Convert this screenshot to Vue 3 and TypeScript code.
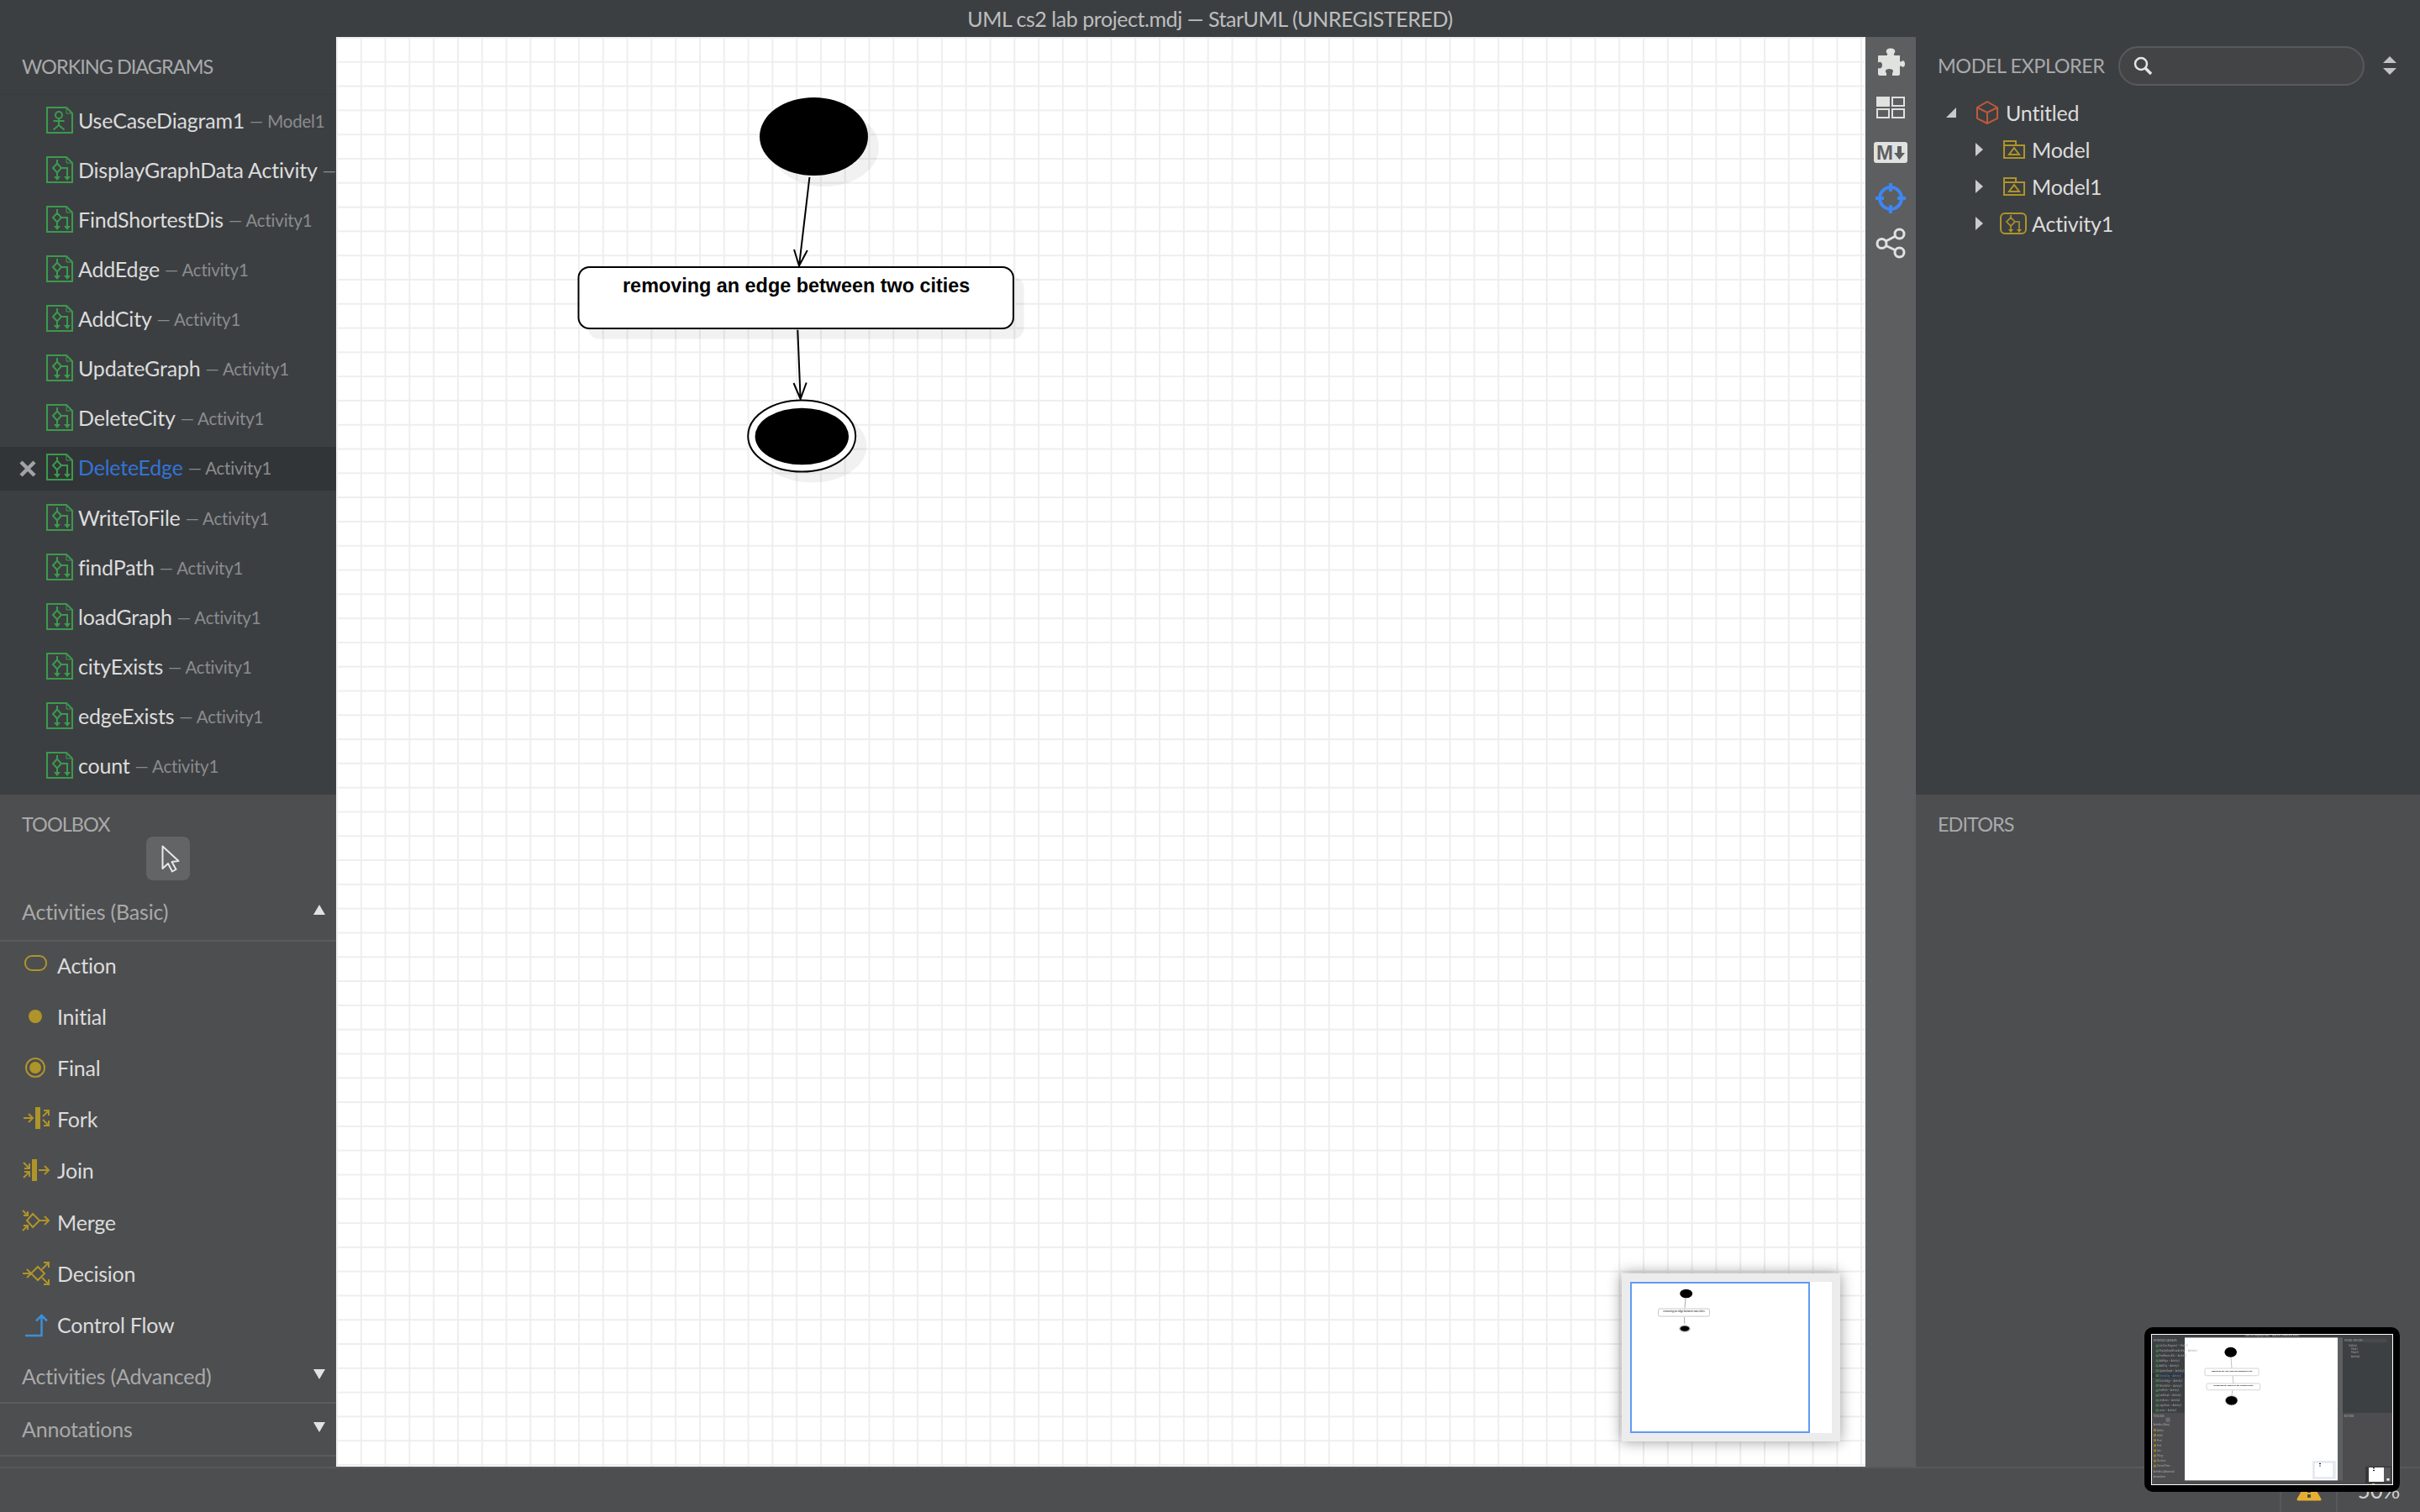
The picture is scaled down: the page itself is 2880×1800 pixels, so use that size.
<template>
  <div class="app">
    <header class="title-bar">UML cs2 lab project.mdj — StarUML (UNREGISTERED)</header>

    <div class="main">
      <!-- left column -->
      <aside class="left">
        <section class="working">
          <div class="panel-title working-title">WORKING DIAGRAMS</div>
          <div class="rows">
            <div v-for="d in diagrams" :key="d.name" class="row" :class="{ active: d.name === 'DeleteEdge' }">
              <span class="row-close">
                <svg v-if="d.name === 'DeleteEdge'" width="20" height="20" viewBox="0 0 20 20">
                  <path d="M2 2 L18 18 M18 2 L2 18" stroke="#a2a3a4" stroke-width="4.5" fill="none" />
                </svg>
              </span>
              <svg class="row-icon" width="32" height="32" viewBox="0 0 32 32" fill="none" stroke="#3c9a4c" stroke-width="2">
                <path d="M1 1 H24 L31 8 V31 H1 Z" />
                <path d="M24 1 V8 H31" stroke-width="1" />
                <template v-if="d.usecase">
                  <circle cx="15" cy="10" r="4" />
                  <path d="M15 14 V22 M8.5 17 H21.5 M8.5 27.5 L15 22 L21.5 27.5" />
                </template>
                <template v-else>
                  <path d="M13 4 V8.5 M13 8.5 L18 14 L13 19.5 L8 14 Z M13 19.5 V26 M18 14 H25 V26" />
                  <path d="M9 24 H17 L13 29 Z M21 24 H29 L25 29 Z" fill="#3c9a4c" stroke="none" />
                </template>
              </svg>
              <span class="row-name">{{ d.name }}</span>
              <span class="row-sub">— {{ d.owner }}</span>
            </div>
          </div>
        </section>

        <section class="toolbox">
          <div class="panel-title toolbox-title">TOOLBOX</div>
          <div class="cursor-wrap">
            <div class="cursor-btn">
              <svg width="52" height="52" viewBox="0 0 52 52">
                <path d="M19.5 11.5 V38 L26 32 L31 41.5 L35.5 39 L30.5 30 L38.5 29 Z" fill="#636466" stroke="#e6e7e7" stroke-width="2" stroke-linejoin="round" />
              </svg>
            </div>
          </div>

          <div class="group-head open">
            <span>Activities (Basic)</span>
            <svg width="14" height="12" viewBox="0 0 14 12"><path d="M7 0 L14 12 H0 Z" fill="#e2e2e2" /></svg>
          </div>
          <div class="tools">
            <div v-for="t in tools" :key="t" class="tool">
              <svg class="tool-icon" width="34" height="30" viewBox="0 0 34 30" fill="none" stroke="#ae9429" stroke-width="2">
                <rect v-if="t === 'Action'" x="4" y="4" width="25" height="17" rx="8" />
                <circle v-if="t === 'Initial'" cx="16" cy="15" r="8" fill="#ae9429" stroke="none" />
                <template v-if="t === 'Final'">
                  <circle cx="16" cy="15" r="11" />
                  <circle cx="16" cy="15" r="7" fill="#ae9429" stroke="none" />
                </template>
                <template v-if="t === 'Fork'">
                  <rect x="16" y="1" width="6" height="26" fill="#ae9429" stroke="none" />
                  <path d="M2 14 H13 M8 9 L13 14 L8 19 M25 12 L32 5 M26 5 H32 V11 M25 16 L32 23 M32 17 V23 H26" />
                </template>
                <template v-if="t === 'Join'">
                  <rect x="12" y="2" width="6" height="26" fill="#ae9429" stroke="none" />
                  <path d="M20 15 H32 M27 10 L32 15 L27 20 M2 6 L9 13 M9 7 V13 H3 M2 24 L9 17 M3 17 H9 V23" />
                </template>
                <template v-if="t === 'Merge'">
                  <path d="M13 5 L21 13 L13 21 L6 13 Z M21 13 H32 M27 8 L32 13 L27 18 M1 1 L7 7 M7 2 V7 H2 M1 25 L7 19 M2 19 H7 V24" />
                </template>
                <template v-if="t === 'Decision'">
                  <path d="M19 7 L27 15 L19 23 L11 15 Z M1 15 H11 M6 10 L11 15 L6 20 M24 10 L32 2 M26 2 H32 V8 M24 20 L32 28 M32 22 V28 H26" />
                </template>
                <path v-if="t === 'Control Flow'" d="M4 28 H23.5 V4 M17 10.5 L23.5 4 L30 10.5" stroke="#3d8fd6" stroke-width="2.5" />
              </svg>
              <span>{{ t }}</span>
            </div>
          </div>

          <div class="group-head">
            <span>Activities (Advanced)</span>
            <svg width="14" height="12" viewBox="0 0 14 12"><path d="M0 0 H14 L7 12 Z" fill="#e2e2e2" /></svg>
          </div>
          <div class="group-head">
            <span>Annotations</span>
            <svg width="14" height="12" viewBox="0 0 14 12"><path d="M0 0 H14 L7 12 Z" fill="#e2e2e2" /></svg>
          </div>
        </section>
      </aside>

      <!-- diagram canvas -->
      <div class="canvas">
        <svg class="diagram" width="1820" height="1702" viewBox="400 44 1820 1702">
          <ellipse cx="981.5" cy="175.5" rx="64.5" ry="46.5" fill="rgba(0,0,0,0.055)" />
          <rect x="700" y="329.5" width="518.5" height="74" rx="13" fill="rgba(0,0,0,0.055)" />
          <ellipse cx="966.5" cy="531" rx="65" ry="43.5" fill="rgba(0,0,0,0.055)" />

          <ellipse cx="968.5" cy="162.5" rx="64.5" ry="46.5" fill="#000" />
          <path d="M963.4 211 L951 316.5 M945 297 L951 316.5 L960.8 298" fill="none" stroke="#000" stroke-width="2" />
          <rect x="688.5" y="318" width="517.5" height="73" rx="13" fill="#fff" stroke="#000" stroke-width="2" />
          <text x="947.7" y="347.5" class="node-text">removing an edge between two cities</text>
          <path d="M949.3 392.7 L952.6 475 M944.5 456 L952.6 475 L959.7 455.5" fill="none" stroke="#000" stroke-width="2" />
          <ellipse cx="954.2" cy="519" rx="64" ry="42.5" fill="#fff" stroke="#000" stroke-width="2" />
          <ellipse cx="954.3" cy="519.5" rx="55.7" ry="33.8" fill="#000" />
        </svg>

        <div class="minimap">
          <svg width="240" height="180" viewBox="0 0 240 180">
            <rect width="240" height="180" fill="#fff" />
            <ellipse cx="66.7" cy="14" rx="7.5" ry="5.2" fill="#000" />
            <path d="M66 19 L65 31 M64.5 42 L64.8 50" stroke="#aaa" fill="none" />
            <rect x="33.5" y="32" width="61" height="9" rx="1.5" fill="#fff" stroke="#c8c8c8" />
            <text x="64" y="36.2" class="mini-text">removing an edge between two cities</text>
            <ellipse cx="65" cy="55.7" rx="6.2" ry="3.8" fill="#000" stroke="#ccc" stroke-width="1.4" />
            <rect x="1" y="1" width="212" height="178" fill="none" stroke="#5f9bf5" stroke-width="2" />
          </svg>
        </div>
      </div>

      <!-- icon strip -->
      <nav class="strip">
        <div class="strip-item">
          <svg width="34" height="33" viewBox="0 0 34 33">
            <path fill="#e0e2e0" d="M3 9 H12 C13 9 13.5 8 13 7 C11.5 5 11 3.5 13 1.5 C15 0 19 0 21 1.5 C23 3.5 22.5 5 21 7 C20.5 8 21 9 22 9 H28 V15.5 C28 16.5 29 17 30 16 C31.5 14.5 34 15 34 19 C34 23 31.5 23.5 30 22 C29 21 28 21.5 28 22.5 V31 C28 32 27 33 26 33 H19 V30 C21 28 20 25 15.5 25 C11 25 10 28 12 30 V33 H4 C3 33 2 32 2 31 V24 C4 25 7 24.5 7 20.5 C7 16.5 4 16 2 17.5 V10 C2 9.5 2.5 9 3 9 Z" />
          </svg>
        </div>
        <div class="strip-item">
          <svg width="34" height="26" viewBox="0 0 34 26" fill="none" stroke="#e0e2e0" stroke-width="2">
            <rect x="0" y="0" width="16" height="12" fill="#e0e2e0" stroke="none" />
            <rect x="19" y="1" width="14" height="10" />
            <rect x="1" y="15" width="14" height="10" />
            <rect x="19" y="15" width="14" height="10" />
          </svg>
        </div>
        <div class="strip-item">
          <svg width="40" height="26" viewBox="0 0 40 26">
            <rect width="40" height="25" rx="3" fill="#e0e2e0" />
            <text x="3" y="21" class="md-text">M</text>
            <path d="M28 5 H33 V13 H37 L30.5 21 L24 13 H28 Z" fill="#5d5e60" />
          </svg>
        </div>
        <div class="strip-item">
          <svg width="36" height="36" viewBox="0 0 36 36" fill="none" stroke="#3e86f0" stroke-width="4">
            <circle cx="18" cy="18" r="13" />
            <path d="M18 0 V10 M18 26 V36 M0 18 H10 M26 18 H36" />
          </svg>
        </div>
        <div class="strip-item">
          <svg width="36" height="37" viewBox="0 0 36 37" fill="none" stroke="#e0e2e0" stroke-width="3">
            <circle cx="28.5" cy="7.5" r="5.5" />
            <circle cx="7.5" cy="19" r="5.5" />
            <circle cx="28.5" cy="29.5" r="5.5" />
            <path d="M12.5 16 L24 10 M12.5 21.5 L24 27" />
          </svg>
        </div>
      </nav>

      <!-- right column -->
      <aside class="right">
        <section class="explorer">
          <div class="explorer-head">
            <span class="panel-title explorer-title">MODEL EXPLORER</span>
            <div class="search">
              <svg width="24" height="24" viewBox="0 0 24 24" fill="none" stroke="#e4e4e4">
                <circle cx="10" cy="10" r="7" stroke-width="2.5" />
                <path d="M15 15 L22 22" stroke-width="3.5" />
              </svg>
            </div>
            <svg class="sort" width="16" height="22" viewBox="0 0 16 22">
              <path d="M8 0 L16 8 H0 Z M0 14 H16 L8 22 Z" fill="#c2c3c3" />
            </svg>
          </div>
          <div class="tree">
            <div class="node root-node">
              <svg class="twist" width="12" height="12" viewBox="0 0 12 12"><path d="M12 0 V12 H0 Z" fill="#c9caca" /></svg>
              <svg class="node-icon" width="26" height="28" viewBox="0 0 26 28" fill="none" stroke="#c0593a" stroke-width="2">
                <path d="M13 1 L25 8 V21 L13 27 L1 21 V8 Z M1 8 L13 14 L25 8 M13 14 V27" />
              </svg>
              <span>Untitled</span>
            </div>
            <div v-for="m in ['Model', 'Model1']" :key="m" class="node child-node">
              <svg class="twist" width="9" height="16" viewBox="0 0 9 16"><path d="M0 0 L9 8 L0 16 Z" fill="#c9caca" /></svg>
              <svg class="node-icon pkg" width="26" height="22" viewBox="0 0 26 22" fill="none" stroke="#ae9429" stroke-width="2">
                <path d="M1 6 V1 H15 V6 M1 6 H25 V21 H1 Z M13 9 L19 17 H7 Z" />
              </svg>
              <span>{{ m }}</span>
            </div>
            <div class="node child-node">
              <svg class="twist" width="9" height="16" viewBox="0 0 9 16"><path d="M0 0 L9 8 L0 16 Z" fill="#c9caca" /></svg>
              <svg class="node-icon act" width="32" height="26" viewBox="0 0 32 26" fill="none" stroke="#ae9429" stroke-width="2">
                <rect x="1" y="1" width="30" height="24" rx="5" />
                <path d="M13 3 V6 M13 6 L18 11 L13 16 L8 11 Z M13 16 V21 M18 11 H23 V21" stroke-width="1.6" />
                <path d="M10 20 H16 L13 24 Z M20 20 H26 L23 24 Z" fill="#ae9429" stroke="none" />
              </svg>
              <span>Activity1</span>
            </div>
          </div>
        </section>
        <section class="editors">
          <div class="panel-title editors-title">EDITORS</div>
        </section>
      </aside>
    </div>

    <footer class="status">
      <div class="status-cell warn">
        <svg width="30" height="28" viewBox="0 0 30 28">
          <path d="M15 2 L28 25 H2 Z" fill="#e8ae31" stroke="#e8ae31" stroke-width="3" stroke-linejoin="round" />
          <rect x="13" y="9" width="4" height="8" fill="#4d4e50" />
          <rect x="13" y="19" width="4" height="4" fill="#4d4e50" />
        </svg>
      </div>
      <div class="status-cell zoom-cell">50%</div>
    </footer>

    <!-- screenshot preview that floats over the corner -->
    <div class="preview">
      <svg width="288" height="180" viewBox="0 0 288 180">
        <defs>
          <filter id="previewBlur" x="-2%" y="-2%" width="104%" height="104%">
            <feGaussianBlur stdDeviation="0.45" />
          </filter>
        </defs>
        <g filter="url(#previewBlur)">
          <rect width="288" height="180" fill="#3c3f42" />
          <rect y="94" width="40" height="80" fill="#4d4e50" />
          <rect x="226" y="94" width="62" height="80" fill="#4d4e50" />
          <rect y="174" width="288" height="6" fill="#4d4e50" />
          <rect x="222" y="4.4" width="6" height="170" fill="#5d5e60" />
          <rect x="40" y="4.4" width="182" height="170" fill="#fff" />
          <text x="144" y="3.2" class="pv-title" text-anchor="middle">UML cs2 lab project.mdj — StarUML (UNREGISTERED)</text>
          <text x="2.8" y="8.7" class="pv-head">WORKING DIAGRAMS</text>
          <rect y="47" width="40" height="5.2" fill="#323537" />
          <g v-for="(d, i) in previewRows" :key="d">
            <rect x="5.5" :y="12.7 + i * 5.9" width="3.2" height="3.2" fill="#3c7a48" />
            <text x="9.5" :y="15.3 + i * 5.9" class="pv-row" :class="{ blue: i === 6 }">{{ d }}</text>
          </g>
          <text x="2.8" y="98.8" class="pv-head">TOOLBOX</text>
          <rect x="17.5" y="99.7" width="5.2" height="5.2" fill="#6b6c6e" />
          <text x="2.8" y="109.4" class="pv-head">Activities (Basic)</text>
          <g v-for="(t, i) in tools" :key="t">
            <rect x="3" :y="113 + i * 6.1" width="3" height="3" fill="#8f7c30" />
            <text x="7" :y="115.7 + i * 6.1" class="pv-row">{{ t }}</text>
          </g>
          <text x="2.8" y="164.8" class="pv-head">Activities (Advanced)</text>
          <text x="2.8" y="171" class="pv-head">Annotations</text>
          <text x="230" y="8.7" class="pv-head">MODEL EXPLORER</text>
          <rect x="252" y="5.5" width="29" height="4.6" rx="2.3" fill="#48494b" />
          <text x="235" y="14.7" class="pv-row">Untitled</text>
          <text x="238" y="19" class="pv-row">Model</text>
          <text x="238" y="23.4" class="pv-row">Model1</text>
          <text x="238" y="27.8" class="pv-row">Activity1</text>
          <text x="230" y="98.8" class="pv-head">EDITORS</text>

          <ellipse cx="94.7" cy="21.7" rx="7.3" ry="6" fill="#000" />
          <path d="M95 28 L96 41 M97 49.7 L98 59 M97 66.7 L96 73" stroke="#999" stroke-width="0.6" fill="none" />
          <rect x="64" y="41" width="64" height="8.7" rx="1.5" fill="#fff" stroke="#c9c9c9" stroke-width="0.8" />
          <text x="96" y="44.6" class="pv-node">removing the city from the adjacency list</text>
          <rect x="66" y="59" width="63.7" height="7.7" rx="1.5" fill="#fff" stroke="#c9c9c9" stroke-width="0.8" />
          <text x="98" y="62.4" class="pv-node">Removing all edges of the removed city</text>
          <ellipse cx="95.7" cy="79.3" rx="7.3" ry="5.6" fill="#000" stroke="#bbb" stroke-width="0.8" />

          <rect x="192" y="151" width="28" height="21.7" fill="#ececec" />
          <rect x="194" y="153" width="23" height="18" fill="#fff" stroke="#c9dafa" stroke-width="0.8" />
          <ellipse cx="201" cy="154.5" rx="1" ry="0.8" fill="#000" />
          <ellipse cx="201" cy="157" rx="0.8" ry="0.6" fill="#000" />

          <rect x="255" y="157.7" width="31" height="20" fill="#36383a" />
          <rect x="259" y="159" width="18" height="17" fill="#fff" />
          <rect x="277" y="159" width="8" height="17" fill="#56585a" />
          <ellipse cx="265" cy="159.8" rx="1" ry="0.8" fill="#000" />
          <ellipse cx="265" cy="162.5" rx="1" ry="0.8" fill="#000" />
          <rect x="280.5" y="172" width="3" height="2.6" fill="#fff" />
          <rect x="263" y="178" width="3" height="2" fill="#e8ae31" />
        </g>
        <rect x="0.5" y="0.5" width="287" height="179" fill="none" stroke="#fff" />
      </svg>
    </div>
  </div>
</template>

<script setup lang="ts">
interface DiagramRow {
  name: string;
  owner: string;
  usecase?: boolean;
}

const activityNames = [
  'DisplayGraphData Activity',
  'FindShortestDis',
  'AddEdge',
  'AddCity',
  'UpdateGraph',
  'DeleteCity',
  'DeleteEdge',
  'WriteToFile',
  'findPath',
  'loadGraph',
  'cityExists',
  'edgeExists',
  'count',
];

const diagrams: DiagramRow[] = [
  { name: 'UseCaseDiagram1', owner: 'Model1', usecase: true },
  ...activityNames.map((name) => ({ name, owner: 'Activity1' })),
];

const tools = ['Action', 'Initial', 'Final', 'Fork', 'Join', 'Merge', 'Decision', 'Control Flow'];

// the small preview shows the list as it was one diagram earlier
const previewRows = ['UseCaseDiagram1 — Model1', ...activityNames.map((n) => n + ' — Activity1')];
</script>

<style>
html,
body {
  margin: 0;
  background: #3c3f42;
}
</style>

<style scoped>
.app {
  position: relative;
  width: 2880px;
  height: 1800px;
  display: flex;
  flex-direction: column;
  overflow: hidden;
  background: #3c3f42;
  font-family: Lato, "Noto Sans", sans-serif;
  font-size: 25px;
  letter-spacing: -0.2px;
  color: #dcdcdc;
}

.title-bar {
  height: 44px;
  flex: none;
  display: flex;
  align-items: center;
  justify-content: center;
  color: #bdbebe;
  letter-spacing: -0.45px;
}

.main {
  flex: none;
  height: 1702px;
  display: flex;
}

.left {
  width: 400px;
  flex: none;
  display: flex;
  flex-direction: column;
}

.panel-title {
  color: #a8a9aa;
  white-space: nowrap;
  font-size: 23.5px;
  letter-spacing: -1px;
}

.working {
  height: 902px;
  flex: none;
  overflow: hidden;
}

.working-title {
  height: 69px;
  box-sizing: border-box;
  padding: 20px 0 0 26px;
  line-height: 30px;
  border-bottom: 1px solid #393c3f;
}

.rows {
  padding-top: 6px;
}

.row {
  height: 52px;
  margin-bottom: 7.07px;
  display: flex;
  align-items: center;
  white-space: nowrap;
  overflow: hidden;
}

.row.active {
  background: #323537;
}

.row-close {
  width: 55px;
  flex: none;
  box-sizing: border-box;
  padding-left: 23px;
  display: flex;
}

.row-icon {
  flex: none;
  margin-top: -4px;
  margin-right: 6px;
}

.row-name {
  margin-top: -4px;
}

.row.active .row-name {
  color: #3273d8;
}

.row-sub {
  margin-left: 6px;
  font-size: 20.5px;
  color: #8a8c8e;
  margin-top: -2px;
}

.toolbox {
  flex: 1;
  background: #4d4e50;
}

.toolbox-title {
  height: 50px;
  box-sizing: border-box;
  padding: 20px 0 0 26px;
  line-height: 30px;
}

.cursor-wrap {
  display: flex;
  justify-content: center;
  height: 55px;
}

.cursor-btn {
  width: 52px;
  height: 52px;
  border-radius: 8px;
  background: #636466;
}

.group-head {
  height: 61px;
  margin-top: 2px;
  box-sizing: border-box;
  border-bottom: 2px solid #5a5b5d;
  padding: 0 13px 2px 26px;
  display: flex;
  align-items: center;
  justify-content: space-between;
  color: #a9a9a9;
}

.group-head.open {
  height: 70px;
  margin-top: 0;
  padding-bottom: 1px;
}

.group-head svg {
  margin-top: -5px;
}

.group-head.open svg {
  margin-top: -3px;
}

.tools {
  margin-top: -3px;
}

.tool {
  height: 61.2px;
  display: flex;
  align-items: center;
}

.tool-icon {
  margin-left: 26px;
  margin-right: 8px;
  flex: none;
}

.canvas {
  position: relative;
  flex: 1;
  background-color: #fff;
  background-image:
    linear-gradient(to right, #eee 1.5px, transparent 1.5px),
    linear-gradient(to bottom, #eee 1.5px, transparent 1.5px);
  background-size: 28.8px 28.8px;
  overflow: hidden;
}

.diagram {
  position: absolute;
  left: 0;
  top: 0;
}

.node-text {
  font-family: "Liberation Sans", Arial, sans-serif;
  font-size: 23.4px;
  font-weight: 700;
  letter-spacing: 0;
  text-anchor: middle;
  fill: #000;
}

.minimap {
  position: absolute;
  right: 30px;
  bottom: 30px;
  width: 240px;
  height: 180px;
  padding: 10px;
  background: #ececec;
  box-shadow: 0 0 16px rgba(0, 0, 0, 0.4);
}

.minimap svg {
  display: block;
}

.mini-text {
  font-family: "Liberation Sans", Arial, sans-serif;
  font-size: 2.8px;
  font-weight: 700;
  letter-spacing: 0;
  text-anchor: middle;
  fill: #555;
}

.strip {
  width: 60px;
  flex: none;
  background: #5d5e60;
  padding-top: 2.5px;
  box-sizing: border-box;
}

.strip-item {
  height: 54px;
  display: flex;
  align-items: center;
  justify-content: center;
}

.md-text {
  font-family: "Liberation Sans", Arial, sans-serif;
  font-size: 24px;
  font-weight: 700;
  letter-spacing: 0;
  fill: #5d5e60;
}

.right {
  width: 600px;
  flex: none;
  display: flex;
  flex-direction: column;
}

.explorer {
  height: 902px;
  flex: none;
}

.explorer-head {
  height: 68px;
  box-sizing: border-box;
  padding-left: 26px;
  display: flex;
  align-items: center;
}

.explorer-title {
  width: 215px;
  flex: none;
  letter-spacing: -0.5px;
}

.search {
  width: 293px;
  height: 47px;
  flex: none;
  box-sizing: border-box;
  padding-left: 15px;
  border: 2px solid #58595b;
  border-radius: 24px;
  background: #434446;
  display: flex;
  align-items: center;
}

.sort {
  margin-left: 22px;
}

.node {
  height: 44px;
  display: flex;
  align-items: center;
}

.root-node {
  padding-left: 36px;
}

.root-node .twist {
  margin-right: 24px;
}

.root-node .node-icon {
  margin-right: 9px;
}

.child-node {
  padding-left: 71px;
}

.child-node .twist {
  margin-right: 24px;
}

.child-node .pkg {
  margin-right: 8px;
}

.child-node .act {
  margin-left: -4px;
  margin-right: 6px;
}

.editors {
  flex: 1;
  background: #4d4e50;
}

.editors-title {
  padding: 20px 0 0 26px;
  line-height: 30px;
}

.status {
  flex: 1;
  background: #4d4e50;
  border-top: 2px solid #58595b;
  display: flex;
  justify-content: flex-end;
}

.status-cell {
  display: flex;
  align-items: center;
  justify-content: center;
  border-left: 2px solid #58595b;
  box-sizing: border-box;
}

.warn {
  width: 67px;
}

.zoom-cell {
  width: 100px;
  color: #d0d0d0;
  font-size: 26px;
}

.preview {
  position: absolute;
  right: 24px;
  bottom: 24px;
  padding: 8px;
  background: #000;
  border-radius: 10px;
}

.preview svg {
  display: block;
}

.pv-title {
  font-size: 2.7px;
  letter-spacing: 0;
  fill: #bdbebe;
}

.pv-head {
  font-size: 2.7px;
  letter-spacing: 0;
  fill: #a8a9aa;
}

.pv-row {
  font-size: 2.7px;
  letter-spacing: 0;
  fill: #a5a5a5;
}

.pv-row.blue {
  fill: #5a93e8;
}

.pv-node {
  font-family: "Liberation Sans", Arial, sans-serif;
  font-size: 2.5px;
  font-weight: 700;
  letter-spacing: 0;
  text-anchor: middle;
  fill: #000;
}
</style>
